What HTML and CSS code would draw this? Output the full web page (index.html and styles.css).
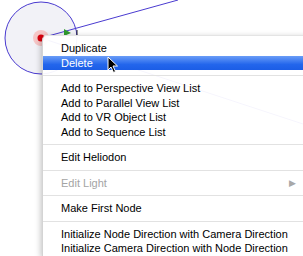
FILE: index.html
```html
<!DOCTYPE html>
<html lang="en">
<head>
    <meta charset="UTF-8">
    <meta name="viewport" content="width=device-width, initial-scale=1.0">
    <title>Node menu</title>
    <link rel="stylesheet" href="styles.css">
</head>
<body>

    <svg class="plan" width="303" height="256" viewBox="0 0 303 256">
        <circle cx="41" cy="38" r="36" fill="#f2f2f7" stroke="#4a3bd0" stroke-width="1"/>
        <line x1="41" y1="38" x2="178" y2="0" stroke="#4a3bd0" stroke-width="1"/>
        <line x1="41" y1="38" x2="303" y2="124" stroke="#4a3bd0" stroke-width="1"/>
        <circle cx="41" cy="38" r="8" fill="#f6c6c6"/>
        <circle cx="41" cy="38" r="3.5" fill="#d8000c"/>
        <path d="M64 29 L64 36 L71 33 Z" fill="#2f9a2f"/>
        <line x1="77" y1="30" x2="77" y2="36" stroke="#222" stroke-width="1"/>
    </svg>

    <div class="menu">
        <div class="item">Duplicate</div>
        <div class="item selected">Delete</div>
        <div class="sep"></div>
        <div class="item">Add to Perspective View List</div>
        <div class="item">Add to Parallel View List</div>
        <div class="item">Add to VR Object List</div>
        <div class="item">Add to Sequence List</div>
        <div class="sep"></div>
        <div class="item">Edit Heliodon</div>
        <div class="sep"></div>
        <div class="item disabled">Edit Light <span class="arrow">&#9654;</span></div>
        <div class="sep"></div>
        <div class="item">Make First Node</div>
        <div class="sep"></div>
        <div class="item">Initialize Node Direction with Camera Direction</div>
        <div class="item">Initialize Camera Direction with Node Direction</div>
    </div>

    <svg class="cursor" width="12" height="18" viewBox="0 0 12 18">
        <path d="M1 1 L1 14 L4 11 L6.5 16.5 L8.5 15.5 L6 10 L10.5 10 Z" fill="#000" stroke="#fff" stroke-width="1"/>
    </svg>

</body>
</html>
```

FILE: styles.css
```css
body {
    margin: 0;
    padding: 0;
    width: 303px;
    height: 256px;
    overflow: hidden;
    background: #fff;
    font-family: "Liberation Sans", Arial, sans-serif;
    font-size: 11px;
    position: relative;
}

.plan {
    position: absolute;
    left: 0;
    top: 0;
}

.menu {
    position: absolute;
    left: 42px;
    top: 35px;
    width: 290px;
    padding-top: 5px;
    background: rgba(255, 255, 255, 0.95);
    border-left: 1px solid #d4d4d4;
    border-top: 1px solid #e4e4e4;
    border-radius: 5px 0 0 0;
    box-shadow: -1px 2px 6px rgba(0, 0, 0, 0.25);
}

.item {
    height: 14.5px;
    line-height: 14.5px;
    padding-left: 18px;
    color: #000;
    white-space: nowrap;
    position: relative;
}

.selected {
    color: #fff;
    background: linear-gradient(#6a9df7, #2366ec 60%, #1b5de6);
}

.disabled {
    color: #a4a4a4;
}

.arrow {
    position: absolute;
    left: 246px;
    font-size: 9px;
    color: #a8a8a8;
}

.sep {
    height: 1px;
    margin: 5px 0;
    background: #e2e2e2;
}

.cursor {
    position: absolute;
    left: 107px;
    top: 56px;
}
```
